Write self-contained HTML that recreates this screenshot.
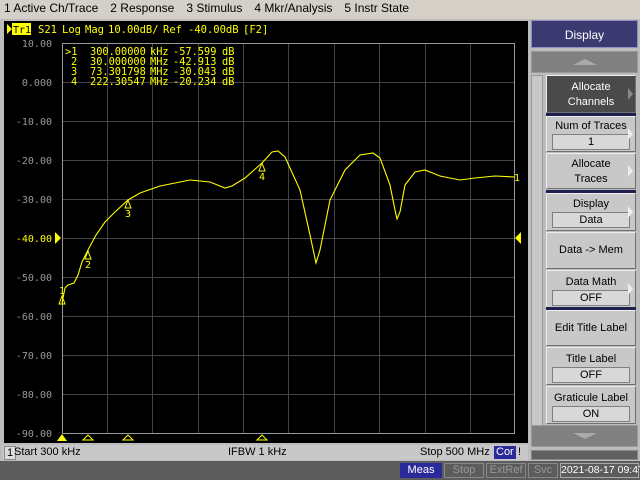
<!DOCTYPE html><html><head><style>
html,body{margin:0;width:640px;height:480px;overflow:hidden}
body{background:#d4d0c8;font-family:"Liberation Sans",sans-serif;position:relative}
.menu{position:absolute;top:0;left:0;width:640px;height:18px;font-size:12px;line-height:17px;color:#000;white-space:nowrap}
.menu span{margin-left:4px;margin-right:8px}
.btn{position:absolute;left:546px;width:90px;background:#c8c8c8;border-top:1px solid #eee;border-left:1px solid #eee;border-right:1px solid #707070;border-bottom:1px solid #707070;font-size:11px;text-align:center;color:#000;box-sizing:border-box}
.val{margin:2px auto 0;width:76px;height:14px;background:#d8d8d8;border:1px solid #808080;line-height:14px}
.arr{position:absolute;right:2px;top:50%;margin-top:-6px;width:0;height:0;border-left:5px solid #eee;border-top:6px solid transparent;border-bottom:6px solid transparent}
.st{position:absolute;top:463px;height:15px;font-size:11px;line-height:13px;text-align:center;box-sizing:border-box;white-space:nowrap}
</style></head><body>
<div class="menu"><span>1 Active Ch/Trace</span><span>2 Response</span><span>3 Stimulus</span><span>4 Mkr/Analysis</span><span>5 Instr State</span></div>
<div style="position:absolute;left:0;top:19px;width:528px;height:442px;background:#bcbcbc"></div>
<div style="position:absolute;left:4px;top:21px;width:524px;height:422px;background:#000"></div>
<svg style="position:absolute;left:0;top:0" width="528" height="445">
<g stroke="#444" stroke-width="1">
<line x1="107.5" y1="43" x2="107.5" y2="433"/><line x1="152.5" y1="43" x2="152.5" y2="433"/><line x1="198.5" y1="43" x2="198.5" y2="433"/><line x1="243.5" y1="43" x2="243.5" y2="433"/><line x1="288.5" y1="43" x2="288.5" y2="433"/><line x1="334.5" y1="43" x2="334.5" y2="433"/><line x1="379.5" y1="43" x2="379.5" y2="433"/><line x1="425.5" y1="43" x2="425.5" y2="433"/><line x1="470.5" y1="43" x2="470.5" y2="433"/>
<line x1="62" y1="82.5" x2="515" y2="82.5"/><line x1="62" y1="121.5" x2="515" y2="121.5"/><line x1="62" y1="160.5" x2="515" y2="160.5"/><line x1="62" y1="199.5" x2="515" y2="199.5"/><line x1="62" y1="238.5" x2="515" y2="238.5"/><line x1="62" y1="277.5" x2="515" y2="277.5"/><line x1="62" y1="316.5" x2="515" y2="316.5"/><line x1="62" y1="355.5" x2="515" y2="355.5"/><line x1="62" y1="394.5" x2="515" y2="394.5"/>
</g>
<rect x="62.5" y="43.5" width="452" height="390" fill="none" stroke="#999"/>
<g font-family="DejaVu Sans Mono,monospace" font-size="10" fill="#999" text-anchor="end">
<text x="52" y="47">10.00</text><text x="52" y="86">0.000</text><text x="52" y="125">-10.00</text><text x="52" y="164">-20.00</text><text x="52" y="203">-30.00</text><text x="52" y="242" fill="#ff0">-40.00</text><text x="52" y="281">-50.00</text><text x="52" y="320">-60.00</text><text x="52" y="359">-70.00</text><text x="52" y="398">-80.00</text><text x="52" y="437">-90.00</text></g>
<polyline fill="none" stroke="#ff0" stroke-width="1.1" points="62,303 65,288 68,285 74,283 78,275 82,262 88,250 96,235 105,222 115,212 128,200 140,193 160,186 190,180 210,182 225,188 232,186 245,178 262,163 272,152 278,151 285,157 300,190 310,235 316,263 320,250 330,200 345,170 360,155 373,153 380,158 390,185 395,210 397,219 400,212 405,185 415,172 425,170 440,176 460,180 475,178 495,176 515,177"/>
<polygon points="55,232 55,244 61,238" fill="#ff0"/><polygon points="521,232 521,244 515,238" fill="#ff0"/>
<g fill="none" stroke="#ff0"><polygon points="88,251 85,259 91,259"/><polygon points="128,200 125,208 131,208"/><polygon points="262,163 259,171 265,171"/><polygon points="62,296 59,304 65,304"/></g>
<g font-family="DejaVu Sans Mono,monospace" font-size="10" fill="#ff0"><text x="85" y="268">2</text><text x="125" y="217">3</text><text x="259" y="180">4</text><text x="59" y="294">1</text><text x="514" y="181">1</text></g>
<polygon points="57,441 62,434 67,441" fill="#ff0"/>
<g fill="none" stroke="#ff0"><polygon points="83,440 88,435 93,440"/><polygon points="123,440 128,435 133,440"/><polygon points="257,440 262,435 267,440"/></g>
<polygon points="7,24 7,34 12,29" fill="#ff0"/><rect x="12" y="23" width="19" height="12" fill="#ff0"/>
<text x="13" y="33" font-family="DejaVu Sans Mono,monospace" font-size="10" fill="#000">Tr1</text>
<g font-family="DejaVu Sans Mono,monospace" font-size="10.5" fill="#ff0"><text x="38" y="33">S21</text><text x="62" y="33">Log</text><text x="85" y="33">Mag</text><text x="108" y="33">10.00dB/</text><text x="163" y="33">Ref</text><text x="188" y="33">-40.00dB</text><text x="243" y="33">[F2]</text></g>
<g font-family="DejaVu Sans Mono,monospace" font-size="10.3" fill="#ff0">
<text x="65" y="55">&gt;1</text><text x="90" y="55">300.00000</text><text x="150" y="55">kHz</text><text x="173" y="55">-57.599</text><text x="222" y="55">dB</text>
<text x="71" y="65">2</text><text x="90" y="65">30.000000</text><text x="150" y="65">MHz</text><text x="173" y="65">-42.913</text><text x="222" y="65">dB</text>
<text x="71" y="75">3</text><text x="90" y="75">73.301798</text><text x="150" y="75">MHz</text><text x="173" y="75">-30.043</text><text x="222" y="75">dB</text>
<text x="71" y="85">4</text><text x="90" y="85">222.30547</text><text x="150" y="85">MHz</text><text x="173" y="85">-20.234</text><text x="222" y="85">dB</text>
</g>
</svg>
<div style="position:absolute;left:2px;top:445px;width:526px;height:15px;background:#c8c8c8;font-size:11px;line-height:15px;white-space:nowrap">
<span style="position:absolute;left:2px;top:1px;border:1px solid #888;height:12px;line-height:12px;padding:0 2px;background:#ddd">1</span>
<span style="position:absolute;left:12px">Start 300 kHz</span><span style="position:absolute;left:226px">IFBW 1 kHz</span><span style="position:absolute;left:418px">Stop 500 MHz</span>
<span style="position:absolute;left:492px;top:1px;background:#2a2a9a;color:#fff;height:13px;line-height:13px;padding:0 2px">Cor</span><span style="position:absolute;left:516px">!</span></div>
<div style="position:absolute;left:0;top:461px;width:640px;height:19px;background:#5c5c5c"></div>
<div class="st" style="left:400px;width:42px;background:#2a2a9a;color:#fff;line-height:15px">Meas</div>
<div class="st" style="left:444px;width:40px;color:#999;border:1px solid #888">Stop</div>
<div class="st" style="left:486px;width:40px;color:#999;border:1px solid #888">ExtRef</div>
<div class="st" style="left:528px;width:30px;color:#999;border:1px solid #888">Svc</div>
<div class="st" style="left:560px;width:79px;color:#fff;border:1px solid #aaa;font-size:10.5px">2021-08-17 09:47</div>
<div style="position:absolute;left:528px;top:19px;width:112px;height:442px;background:#bcbcbc"></div>
<div style="position:absolute;left:531px;top:20px;width:107px;height:28px;background:#3a3a70;border:1px solid #9090c0;box-sizing:border-box;color:#fff;font-size:12px;text-align:center;line-height:28px">Display</div>
<div style="position:absolute;left:531px;top:51px;width:107px;height:22px;background:#808080;border:1px solid #999;box-sizing:border-box"><div style="margin:7px auto 0;width:0;border-left:12px solid transparent;border-right:12px solid transparent;border-bottom:6px solid #aaa"></div></div>
<div style="position:absolute;left:531px;top:75px;width:12px;height:365px;background:#c8c8c8;border:1px solid #999;box-sizing:border-box"></div>
<div class="btn" style="top:75px;height:38px;background:#4a4a4a;color:#fff;padding-top:4px;line-height:15px">Allocate<br>Channels<div class="arr" style="border-left-color:#888"></div></div>
<div style="position:absolute;left:546px;top:113px;width:90px;height:3px;background:#202050"></div>
<div class="btn" style="top:116px;height:36px;padding-top:3px">Num of Traces<div class="val">1</div><div class="arr"></div></div>
<div class="btn" style="top:153px;height:36px;padding-top:3px;line-height:15px">Allocate<br>Traces<div class="arr"></div></div>
<div style="position:absolute;left:546px;top:190px;width:90px;height:3px;background:#202050"></div>
<div class="btn" style="top:193px;height:38px;padding-top:4px">Display<div class="val">Data</div><div class="arr"></div></div>
<div class="btn" style="top:232px;height:37px;line-height:35px">Data -&gt; Mem</div>
<div class="btn" style="top:270px;height:38px;padding-top:5px">Data Math<div class="val">OFF</div><div class="arr"></div></div>
<div style="position:absolute;left:546px;top:307px;width:90px;height:3px;background:#202050"></div>
<div class="btn" style="top:310px;height:36px;line-height:34px">Edit Title Label</div>
<div class="btn" style="top:347px;height:38px;padding-top:5px">Title Label<div class="val">OFF</div></div>
<div class="btn" style="top:386px;height:38px;padding-top:5px">Graticule Label<div class="val">ON</div></div>
<div style="position:absolute;left:531px;top:425px;width:107px;height:22px;background:#808080;border:1px solid #999;box-sizing:border-box"><div style="margin:7px auto 0;width:0;border-left:12px solid transparent;border-right:12px solid transparent;border-top:6px solid #aaa"></div></div>
<div style="position:absolute;left:531px;top:450px;width:107px;height:10px;background:#606060;border:1px solid #888;box-sizing:border-box"></div>
</body></html>
